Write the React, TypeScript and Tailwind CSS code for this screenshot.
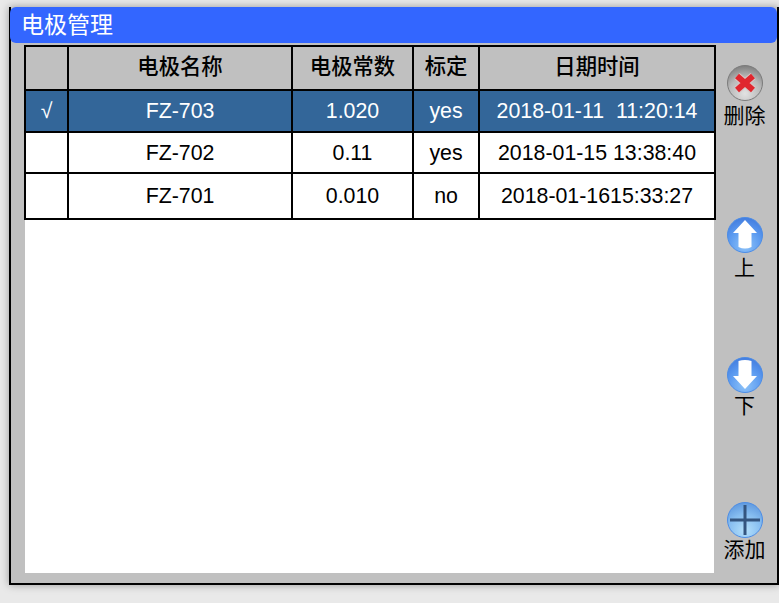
import { useId } from 'react'

const CJK = 'font-["Liberation_Sans","Noto_Sans_CJK_SC",sans-serif]'

interface Row {
  checked: boolean
  name: string
  constant: string
  calibrated: string
  date: string
}

const rows: Row[] = [
  { checked: true, name: 'FZ-703', constant: '1.020', calibrated: 'yes', date: '2018-01-11  11:20:14' },
  { checked: false, name: 'FZ-702', constant: '0.11', calibrated: 'yes', date: '2018-01-15 13:38:40' },
  { checked: false, name: 'FZ-701', constant: '0.010', calibrated: 'no', date: '2018-01-1615:33:27' },
]

const rowHeights = ['h-[42px]', 'h-[41px]', 'h-[46px]']

function Orb({ kind }: { kind: 'delete' | 'up' | 'down' | 'add' }) {
  const id = useId()
  const gray = kind === 'delete'
  const light = kind === 'add'
  return (
    <svg width="38" height="38" viewBox="0 0 38 38" className="block">
      <defs>
        <radialGradient id={`${id}-fill`} cx="50%" cy="80%" r="85%">
          <stop offset="0%" stopColor={gray ? '#e2e2e2' : light ? '#b4e0fb' : '#8fc4f8'} />
          <stop offset="55%" stopColor={gray ? '#b8b8b8' : light ? '#86bdf0' : '#5b9af0'} />
          <stop offset="100%" stopColor={gray ? '#757575' : light ? '#5a94dc' : '#3f78dc'} />
        </radialGradient>
      </defs>
      <circle cx="19" cy="19" r="17.5" fill={`url(#${id}-fill)`} stroke={gray ? '#7c7c7c' : '#4d8de6'} strokeWidth="1" />
      {kind === 'delete' && (
        <>
          <path d="M11 12 L27 26 M27 12 L11 26" stroke="#d9c4c4" strokeWidth="8" fill="none" />
          <path d="M11 12 L27 26 M27 12 L11 26" stroke="#e0262e" strokeWidth="6" fill="none" />
        </>
      )}
      {kind === 'up' && <path d="M19 4 L31 17 L25.5 17 L25.5 31 Q19 34 12.5 31 L12.5 17 L7 17 Z" fill="#ffffff" />}
      {kind === 'down' && <path d="M12.5 5 Q19 3 25.5 5 L25.5 20 L31 20 L19 33 L7 20 L12.5 20 Z" fill="#ffffff" />}
      {kind === 'add' && <path d="M17.5 4 H20.5 V17.5 H34 V20.5 H20.5 V34 H17.5 V20.5 H4 V17.5 H17.5 Z" fill="#34557f" />}
    </svg>
  )
}

export default function App() {
  return (
    <div className={`h-[603px] w-[779px] overflow-hidden bg-[#e9e9e9] pl-[9px] pt-[7px] ${CJK}`}>
      <div className="flex h-[578px] w-[770px] flex-col border-x-2 border-b-2 border-black bg-[#c0c0c0] shadow-[0_0_8px_rgba(0,0,0,0.35)]">
        <div className="-ml-px h-[36px] shrink-0 rounded-[6px] bg-[#3366ff] pl-[11px] text-[23px] leading-[36px] text-white">
          电极管理
        </div>

        <div className="flex min-h-0 flex-1">
          <div className="relative z-10 mb-[10px] ml-[14px] mt-[2px] w-[689px] bg-white">
            <table className="-ml-px w-[691px] table-fixed border-collapse border-2 border-black text-center text-[21.33px] text-black">
              <colgroup>
                <col className="w-[43px]" />
                <col className="w-[224px]" />
                <col className="w-[121px]" />
                <col className="w-[66px]" />
                <col className="w-[236px]" />
              </colgroup>
              <thead>
                <tr className="h-[44px] bg-[#c0c0c0]">
                  <th className="border-2 border-black" />
                  <th className="border-2 border-black font-medium">电极名称</th>
                  <th className="border-2 border-black font-medium">电极常数</th>
                  <th className="border-2 border-black font-medium">标定</th>
                  <th className="border-2 border-black font-medium">日期时间</th>
                </tr>
              </thead>
              <tbody>
                {rows.map((row, i) => (
                  <tr key={row.name} className={`${rowHeights[i]} ${row.checked ? 'bg-[#336699] text-white' : 'bg-white'}`}>
                    <td className="border-2 border-black pt-[2px]">{row.checked ? '√' : ''}</td>
                    <td className="border-2 border-black pt-[2px]">{row.name}</td>
                    <td className="border-2 border-black pt-[2px]">{row.constant}</td>
                    <td className="border-2 border-black pt-[2px]">{row.calibrated}</td>
                    <td className="whitespace-pre border-2 border-black pt-[2px]">{row.date}</td>
                  </tr>
                ))}
              </tbody>
            </table>
          </div>

          <div className="flex flex-1 flex-col items-center pr-[2px] text-[21px] leading-[24px] text-black">
            <div className="mt-[21px]"><Orb kind="delete" /></div>
            <div className="mt-[2px]">删除</div>
            <div className="mt-[88px]"><Orb kind="up" /></div>
            <div className="mt-[2px]">上</div>
            <div className="mt-[76px]"><Orb kind="down" /></div>
            <div>下</div>
            <div className="mt-[83px]"><Orb kind="add" /></div>
            <div className="-mt-px">添加</div>
          </div>
        </div>
      </div>
    </div>
  )
}
